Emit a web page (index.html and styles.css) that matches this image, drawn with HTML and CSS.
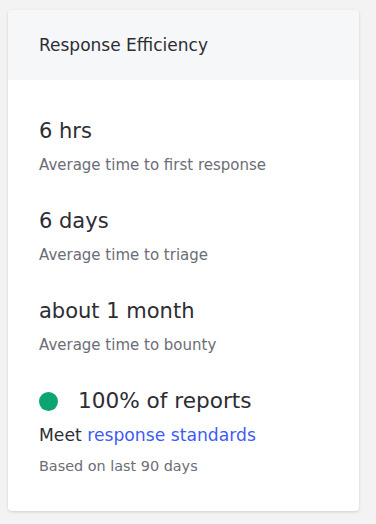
FILE: index.html
```html
<!DOCTYPE html>
<html lang="en">
<head>
    <meta charset="UTF-8">
    <meta name="viewport" content="width=device-width, initial-scale=1.0">
    <title>Response Efficiency</title>
    <link rel="stylesheet" href="styles.css">
</head>
<body>
    <div class="card">
        <div class="card-header">Response Efficiency</div>

        <div class="card-body">
            <div class="metric">
                <div class="metric-value">6 hrs</div>
                <div class="metric-label">Average time to first response</div>
            </div>

            <div class="metric">
                <div class="metric-value">6 days</div>
                <div class="metric-label">Average time to triage</div>
            </div>

            <div class="metric">
                <div class="metric-value">about 1 month</div>
                <div class="metric-label">Average time to bounty</div>
            </div>

            <div class="metric standards">
                <div class="metric-value">
                    <span class="status-dot"></span>
                    100% of reports
                </div>
                <div class="standards-text">Meet <a href="#">response standards</a></div>
                <div class="metric-label">Based on last 90 days</div>
            </div>
        </div>
    </div>
</body>
</html>
```

FILE: styles.css
```css
* {
    margin: 0;
    padding: 0;
    box-sizing: border-box;
}

body {
    font-family: "DejaVu Sans", "Open Sans", sans-serif;
    background: #f3f3f3;
    color: #2d2d33;
    padding: 10px 8px;
}

.card {
    width: 351px;
    background: #fff;
    border-radius: 4px;
    box-shadow: 0 1px 3px rgba(0, 0, 0, 0.15);
    overflow: hidden;
}

.card-header {
    height: 70px;
    display: flex;
    align-items: center;
    padding-left: 31px;
    background: #f6f7f9;
    font-size: 17px;
}

.card-body {
    padding: 37px 31px 35px;
    display: flex;
    flex-direction: column;
    gap: 32px;
}

.metric-value {
    font-size: 21px;
    line-height: 28px;
    display: flex;
    align-items: center;
}

.metric-label {
    margin-top: 10px;
    font-size: 15px;
    line-height: 20px;
    color: #6c6d76;
}

.status-dot {
    width: 19px;
    height: 19px;
    border-radius: 50%;
    background: #0ca46f;
    margin-right: 20px;
}

.standards .metric-value {
    font-size: 21.6px;
}

.standards-text {
    margin-top: 8px;
    font-size: 17.2px;
    line-height: 24px;
}

.standards-text a {
    color: #3e5cf5;
    text-decoration: none;
}

.standards .metric-label {
    margin-top: 9px;
    font-size: 14.4px;
}
```
